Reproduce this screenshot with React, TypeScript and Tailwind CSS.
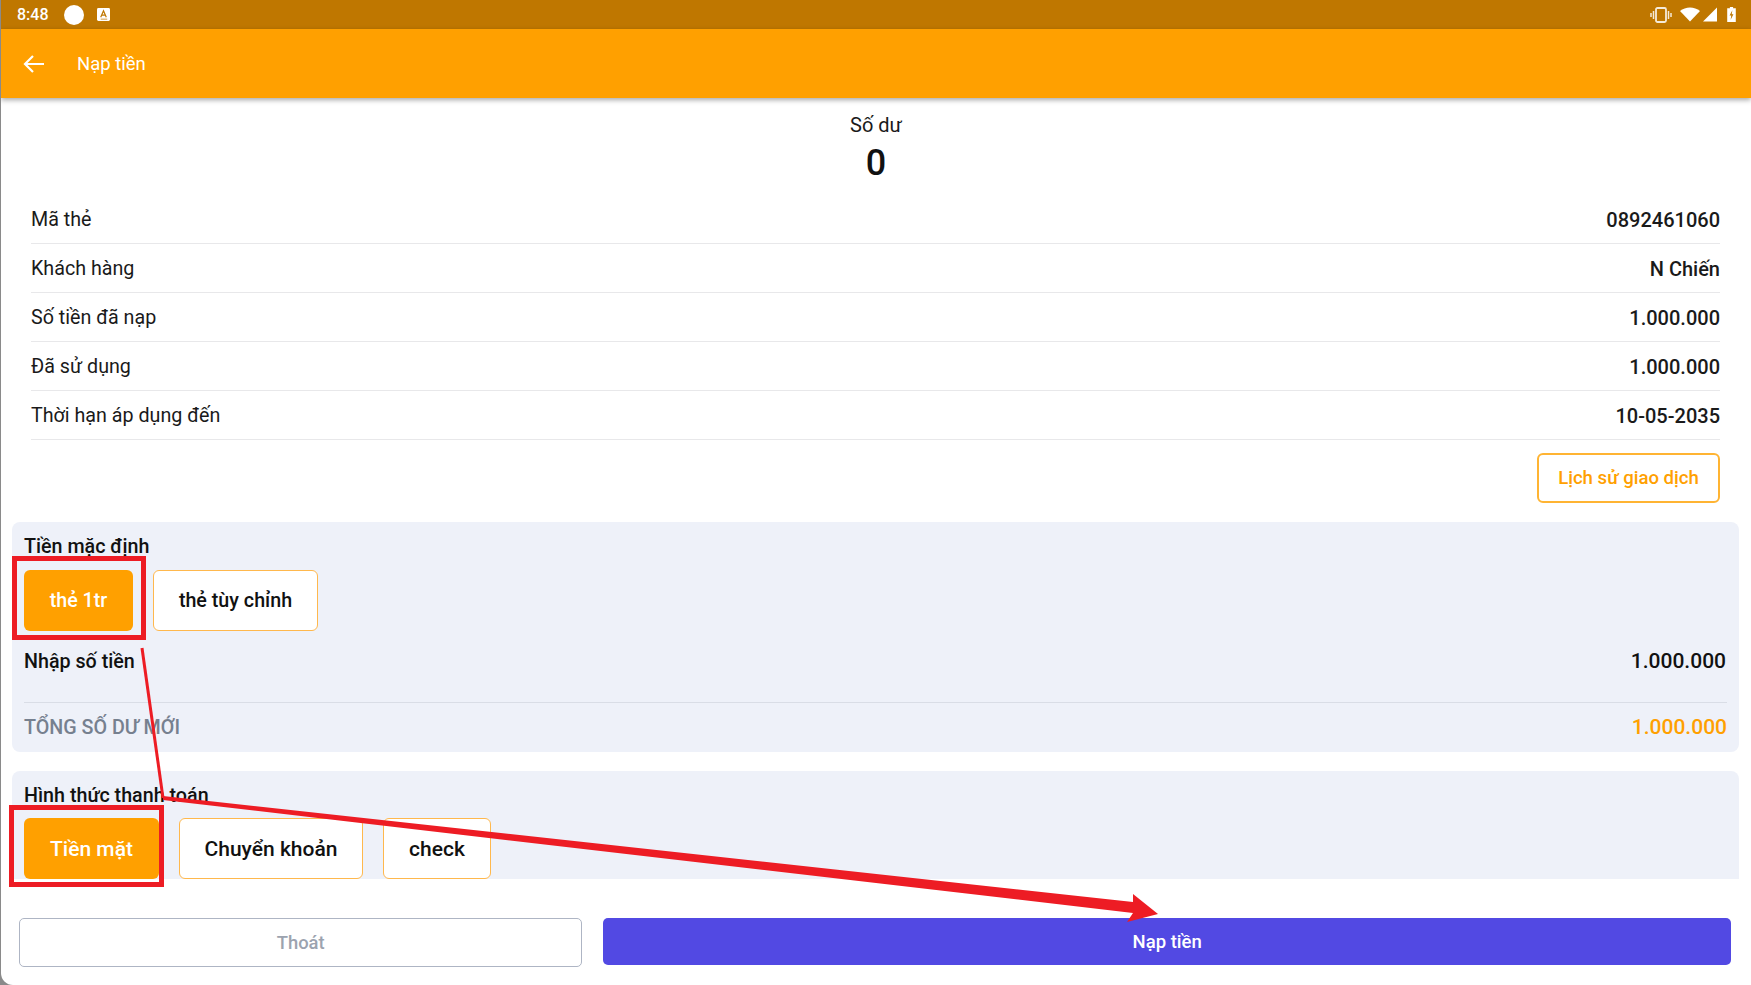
const rows = [
  ["Mã thẻ", "0892461060"],
  ["Khách hàng", "N Chiến"],
  ["Số tiền đã nạp", "1.000.000"],
  ["Đã sử dụng", "1.000.000"],
  ["Thời hạn áp dụng đến", "10-05-2035"],
];

function Chip({ label, active, w, text }: { label: string; active?: boolean; w: string; text: string }) {
  return (
    <div
      className={`${w} ${text} h-[61px] shrink-0 rounded-[6px] flex items-center justify-center font-medium ${
        active ? "bg-[#ffa000] text-white" : "bg-white border border-[#ffb84d] text-[#111111]"
      }`}
    >
      {label}
    </div>
  );
}

export default function App() {
  return (
    <div className="relative w-[1751px] h-[985px] overflow-hidden bg-[#8a8a8a] font-['Roboto',sans-serif] text-[#1a1a1a]">
      <div className="ml-px h-full rounded-bl-[12px] overflow-hidden bg-white flex flex-col">
        <div className="h-[29px] shrink-0 bg-[#bf7700] flex items-center justify-between pl-4 pr-[15px] text-white">
          <div className="flex items-center">
            <span className="text-[16px] font-medium w-[47px]">8:48</span>
            <div className="w-5 h-5 rounded-full bg-white" />
            <svg viewBox="0 0 14 14" className="w-[13px] h-[13px] ml-[13px]">
              <rect width="14" height="14" rx="1.5" fill="#fff" />
              <path d="M4 10 7 3l3 7M5.2 7.6h3.6" stroke="#bf7700" strokeWidth="1.3" fill="none" />
              <path d="M4 12h7" stroke="#bf7700" strokeWidth="0.8" />
            </svg>
          </div>
          <div className="flex items-center">
            <svg viewBox="0 0 22 16" className="w-[22px] h-[16px]" fill="none" stroke="#fff" opacity="0.85">
              <rect x="6" y="1" width="10" height="14" rx="1.5" strokeWidth="1.8" />
              <path d="M3.5 4v8M1 6v4M18.5 4v8M21 6v4" strokeWidth="1.5" />
            </svg>
            <svg viewBox="0 0 20 14" className="w-[20px] h-[15px] ml-2" fill="#fff">
              <path d="M0 3.5C5.5-1.2 14.5-1.2 20 3.5L10 14Z" />
            </svg>
            <svg viewBox="0 0 14 14" className="w-[14px] h-[15px] ml-[3px]" fill="#fff">
              <path d="M14 0v14H0Z" />
            </svg>
            <svg viewBox="0 0 8 14" className="w-[9px] h-[15px] ml-[10px]" fill="#fff">
              <path fillRule="evenodd" d="M2.5 0h3v1.2H8V14H0V1.2h2.5ZM4.8 3 2.2 8h1.6l-.6 4 2.6-5.2H4.2Z" />
            </svg>
          </div>
        </div>
        <div className="relative h-[69px] shrink-0 bg-[#ffa000] shadow-[0_2px_5px_rgba(0,0,0,0.35)] flex items-center pl-[22px] text-white">
          <svg viewBox="0 0 22 18" className="w-[22px] h-[18px]" fill="none" stroke="#fff" strokeWidth="2.2">
            <path d="M21 9H2M10 1 2 9l8 8" />
          </svg>
          <span className="ml-[32px] pt-[2px] text-[18.5px]">Nạp tiền</span>
        </div>

        <div className="flex flex-col items-center pt-[14px] h-[97px] shrink-0">
          <div className="text-[20px] leading-[26px]">Số dư</div>
          <div className="text-[36px] leading-[42px] font-medium mt-[4px] text-[#111111]">0</div>
        </div>

        <div className="mx-[30px] w-[1689px] flex flex-col">
          {rows.map(([k, v]) => (
            <div key={k} className="h-[49px] shrink-0 flex items-center justify-between border-b border-[#e8e8ea] pt-[2px]">
              <span className="text-[19.7px]">{k}</span>
              <span className="text-[20px] font-medium">{v}</span>
            </div>
          ))}
        </div>

        <div className="mx-[30px] w-[1689px] flex justify-end mt-[13px]">
          <div className="w-[183px] h-[50px] pt-[1px] rounded-[6px] border-2 border-[#ffb433] bg-white flex items-center justify-center text-[18.6px] font-medium text-[#ffa000]">
            Lịch sử giao dịch
          </div>
        </div>

        <div className="ml-[11px] w-[1727px] h-[230px] mt-[19px] shrink-0 rounded-[8px] bg-[#eef1f9] px-[12px] flex flex-col">
          <div className="text-[19.7px] font-medium leading-[24px] mt-[13px] text-[#111111]">Tiền mặc định</div>
          <div className="flex gap-5 mt-[11px]">
            <Chip label="thẻ 1tr" active w="w-[109px]" text="text-[19.7px]" />
            <Chip label="thẻ tùy chỉnh" w="w-[165px]" text="text-[19.7px]" />
          </div>
          <div className="flex justify-between items-center h-[72px] border-b border-[#d9dde6] pb-[9px] text-[19.7px] font-medium text-[#111111]">
            <span>Nhập số tiền</span>
            <span className="text-[21px] -translate-x-px">1.000.000</span>
          </div>
          <div className="flex justify-between items-center h-[47px] pt-[3px] text-[19.7px] font-medium">
            <span className="text-[#76808f]">TỔNG SỐ DƯ MỚI</span>
            <span className="text-[21px] text-[#ffa000]">1.000.000</span>
          </div>
        </div>

        <div className="ml-[11px] w-[1727px] h-[108px] mt-[19px] shrink-0 rounded-t-[8px] bg-[#eef1f9] px-[12px] flex flex-col">
          <div className="text-[19.7px] font-medium leading-[24px] mt-[13px] text-[#111111]">Hình thức thanh toán</div>
          <div className="flex gap-5 mt-[10px]">
            <Chip label="Tiền mặt" active w="w-[135px]" text="text-[21px] pt-[3px]" />
            <Chip label="Chuyển khoản" w="w-[184px]" text="text-[21px] pt-[3px]" />
            <Chip label="check" w="w-[108px]" text="text-[21px] pt-[3px]" />
          </div>
        </div>

        <div className="ml-[18px] mt-[39px] flex gap-[21px] w-[1712px]">
          <div className="w-[564px] h-[49px] rounded-[5px] border border-[#aeb5c4] bg-white flex items-center justify-center text-[18.4px] font-medium text-[#9ca3af]">
            Thoát
          </div>
          <div className="w-[1129px] h-[47px] pt-[2px] rounded-[5px] bg-[#5249e3] flex items-center justify-center text-[18.5px] font-medium text-white">
            Nạp tiền
          </div>
        </div>
      </div>

      <svg viewBox="0 0 1751 985" className="absolute inset-0 w-[1751px] h-[985px] pointer-events-none">
        <rect x="14.5" y="558.5" width="129" height="79" fill="none" stroke="#ed1c24" strokeWidth="5" />
        <rect x="11.5" y="807.5" width="150" height="77" fill="none" stroke="#ed1c24" strokeWidth="5" />
        <path d="M142 648 163 798" stroke="#ed1c24" strokeWidth="3" fill="none" />
        <path d="M163 796 1133 902 1133 894 1158 914 1127 922 1133 913 163 800Z" fill="#ed1c24" />
      </svg>
    </div>
  );
}
